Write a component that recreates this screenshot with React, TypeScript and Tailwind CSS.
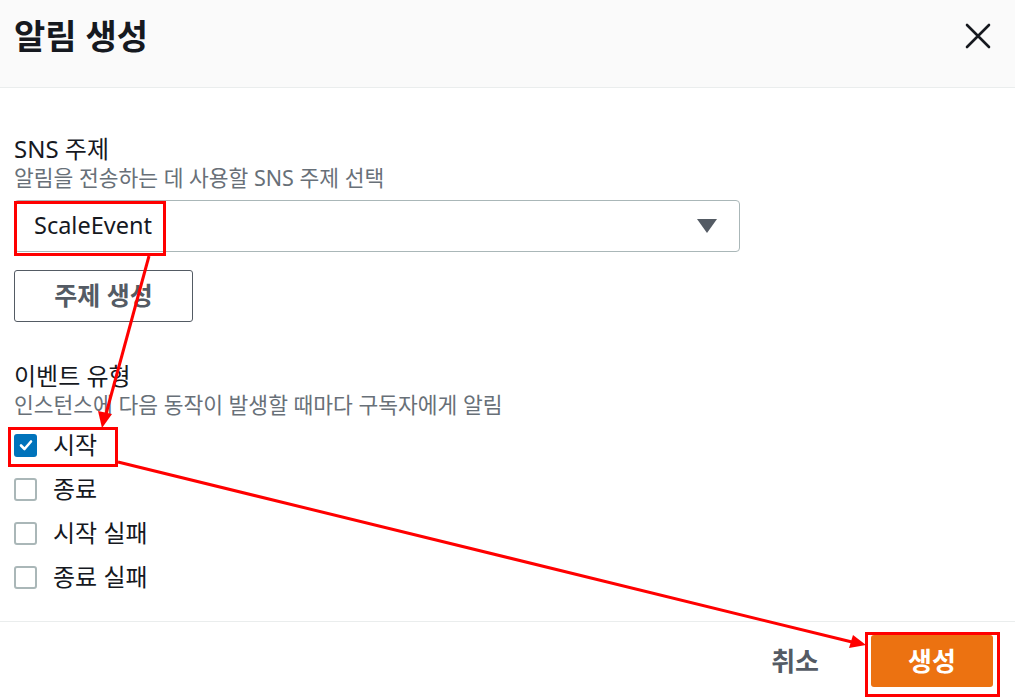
import React from 'react';

const font = { fontFamily: '"Noto Sans", "Noto Sans CJK KR", sans-serif' };

// 이벤트 유형 체크박스 항목
const events = [
  { label: '시작', checked: true },
  { label: '종료', checked: false },
  { label: '시작 실패', checked: false },
  { label: '종료 실패', checked: false },
];

function Checkbox({ checked }: { checked: boolean }) {
  if (checked) {
    return (
      <span className="flex h-[23px] w-[23px] items-center justify-center rounded-[3px] bg-[#0073bb]">
        <svg width="16" height="16" viewBox="0 0 16 16">
          <path d="M3 8.5 L6.5 12 L13 4.5" fill="none" stroke="white" strokeWidth="2.6" strokeLinecap="round" strokeLinejoin="round" />
        </svg>
      </span>
    );
  }
  return <span className="h-[23px] w-[23px] rounded-[3px] border-2 border-[#aab7b8] bg-white" />;
}

export default function App() {
  return (
    <div className="relative h-[700px] w-[1015px] overflow-hidden bg-white" style={font}>
      {/* 헤더 */}
      <header className="flex h-[88px] items-start justify-between border-b border-[#eaeded] bg-[#fafafa] px-[14px] pt-[12px]">
        <h1 className="text-[34px] font-bold leading-[48px] text-[#16191f]">알림 생성</h1>
        <button className="mr-[10px] mt-[11px]">
          <svg width="26" height="26" viewBox="0 0 26 26">
            <path d="M2 2 L24 24 M24 2 L2 24" stroke="#16191f" strokeWidth="2.6" strokeLinecap="round" />
          </svg>
        </button>
      </header>

      {/* 본문 */}
      <main className="px-[14px] pt-[47px]">
        <div className="text-[24px] leading-[28px] text-[#16191f]">SNS 주제</div>
        <div className="mt-[2px] text-[21.5px] leading-[26px] text-[#687078]">알림을 전송하는 데 사용할 SNS 주제 선택</div>
        <div className="mt-[9px] flex h-[52px] w-[726px] items-center justify-between rounded-[4px] border border-[#aab7b8] pl-[19px] pr-[22px]">
          <span className="text-[23.5px] text-[#16191f]">ScaleEvent</span>
          <svg width="20" height="15" viewBox="0 0 20 15">
            <path d="M0 0 H20 L10 14 Z" fill="#545b64" />
          </svg>
        </div>
        <button className="mt-[18px] flex h-[52px] w-[179px] items-center justify-center rounded-[3px] border border-[#545b64] text-[25px] font-bold text-[#545b64]">
          주제 생성
        </button>

        <div className="mt-[40px] text-[24px] leading-[28px] text-[#16191f]">이벤트 유형</div>
        <div className="mt-[2px] text-[21.5px] leading-[26px] text-[#687078]">인스턴스에 다음 동작이 발생할 때마다 구독자에게 알림</div>
        <div className="mt-[5px] flex flex-col">
          {events.map((ev) => (
            <label key={ev.label} className="flex h-[44px] items-center gap-[16px]">
              <Checkbox checked={ev.checked} />
              <span className="text-[24px] text-[#16191f]">{ev.label}</span>
            </label>
          ))}
        </div>
      </main>

      {/* 푸터 */}
      <footer className="absolute bottom-0 left-0 right-0 flex h-[79px] items-center justify-end gap-[52px] border-t border-[#eaeded] pr-[22px]">
        <button className="text-[26px] font-bold text-[#545b64]">취소</button>
        <button className="flex h-[52px] w-[122px] items-center justify-center rounded-[3px] bg-[#ec7211] text-[26px] font-bold text-white">
          생성
        </button>
      </footer>

      {/* 주석 표시 (빨간 박스와 화살표) */}
      <svg className="pointer-events-none absolute left-0 top-0" width="1015" height="700">
        <rect x="15.5" y="202.5" width="149" height="52" fill="none" stroke="#ff0000" strokeWidth="3" />
        <rect x="9.5" y="428.5" width="107" height="37" fill="none" stroke="#ff0000" strokeWidth="3" />
        <rect x="866.5" y="633.5" width="132" height="62" fill="none" stroke="#ff0000" strokeWidth="3" />
        <line x1="149" y1="256" x2="106" y2="414" stroke="#ff0000" strokeWidth="3" />
        <path d="M102 428 L98 411 L112 414 Z" fill="#ff0000" />
        <line x1="118" y1="462" x2="852" y2="642" stroke="#ff0000" strokeWidth="3" />
        <path d="M866 645 L849 648 L853 635 Z" fill="#ff0000" />
      </svg>
    </div>
  );
}
